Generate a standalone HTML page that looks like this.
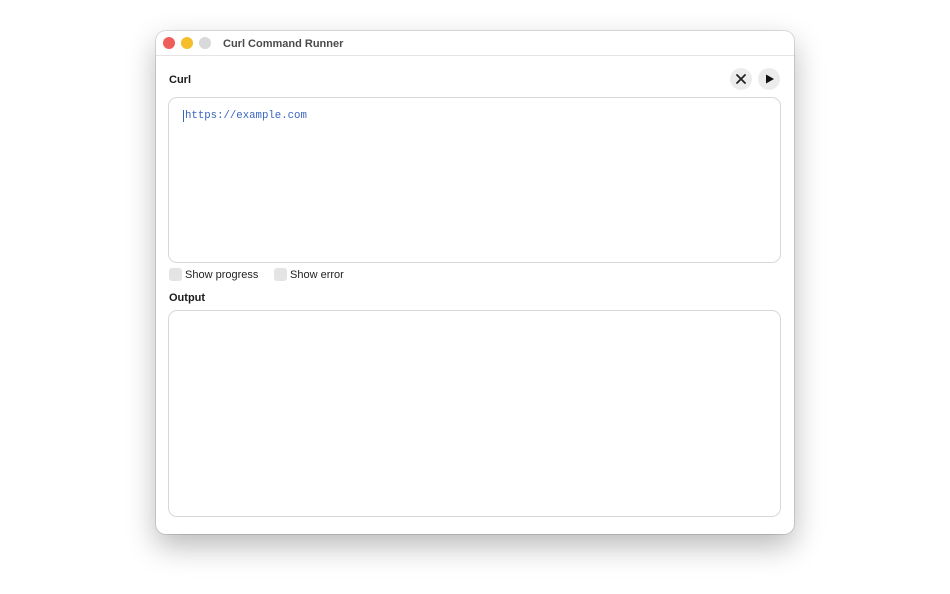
<!DOCTYPE html>
<html><head><meta charset="utf-8"><style>
body{margin:0;width:950px;height:594px;background:#fff;position:relative;overflow:hidden;font-family:"Liberation Sans",sans-serif;}
.win{position:absolute;left:156px;top:31px;width:638px;height:503px;background:#fff;border-radius:10px;box-shadow:0 12px 30px rgba(0,0,0,.28),0 0 0 1px rgba(0,0,0,.12);overflow:hidden}
.tb{height:24px;border-bottom:1px solid #e4e4e4;position:relative}
.dot{position:absolute;top:6px;width:12px;height:12px;border-radius:50%}
.title{position:absolute;left:67px;top:7px;font-size:11px;font-weight:bold;color:#4a4a4a}
.lbl{position:absolute;font-size:11px;font-weight:bold;color:#1a1a1a}
.box{position:absolute;left:12px;width:611px;border:1px solid #d8d8d8;border-radius:9px;background:#fff}
.btn{position:absolute;top:37px;width:22px;height:22px;border-radius:50%;background:#ececec}
.cb{position:absolute;top:237px;width:13px;height:13px;border-radius:3px;background:#e4e4e4}
.ct{position:absolute;top:238px;font-size:11px;color:#222}
</style></head><body>
<div class="win">
 <div class="tb">
  <div class="dot" style="left:7px;background:#ed5f58"></div>
  <div class="dot" style="left:25px;background:#f4bf2b"></div>
  <div class="dot" style="left:43px;background:#d9d9d9"></div>
  <div class="title">Curl Command Runner</div>
 </div>
 <div class="lbl" style="left:13px;top:43px">Curl</div>
 <div class="btn" style="left:574px"><svg width="22" height="22"><path d="M7 7L15 15M15 7L7 15" stroke="#222" stroke-width="1.8" stroke-linecap="round"/></svg></div>
 <div class="btn" style="left:602px"><svg width="22" height="22"><path d="M8 6.5L16 11L8 15.5Z" fill="#111"/></svg></div>
 <div class="box" style="top:66px;height:164px">
  <div style="position:absolute;left:14px;top:12px;font-family:'Liberation Mono',monospace;font-size:10.7px;color:#3a64c0;border-left:1px solid #3a64c0;padding-left:1px">https://example.com</div>
 </div>
 <div class="cb" style="left:13px"></div><div class="ct" style="left:29px">Show progress</div>
 <div class="cb" style="left:118px"></div><div class="ct" style="left:134px">Show error</div>
 <div class="lbl" style="left:13px;top:261px">Output</div>
 <div class="box" style="top:279px;height:205px"></div>
</div>
</body></html>
